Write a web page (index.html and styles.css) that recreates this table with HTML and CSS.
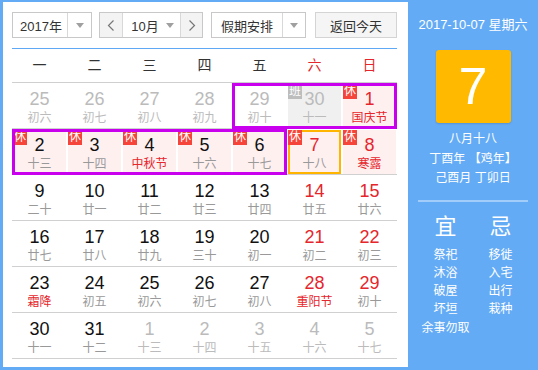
FILE: index.html
```html
<!DOCTYPE html>
<html lang="zh-CN">
<head>
<meta charset="utf-8">
<title>万年历</title>
<link rel="stylesheet" href="styles.css">
</head>
<body>
<div class="app">
  <div class="main">
    <div class="toolbar">
      <div class="select year">
        <span class="val">2017年</span>
        <span class="caret-box"><i class="caret"></i></span>
      </div>
      <div class="monthnav">
        <span class="nav prev"><svg width="8" height="11" viewBox="0 0 8 11"><polyline points="6.5,0.5 1.5,5.5 6.5,10.5" fill="none" stroke="#777" stroke-width="1.2"/></svg></span>
        <span class="mval">10月<i class="caret"></i></span>
        <span class="nav next"><svg width="8" height="11" viewBox="0 0 8 11"><polyline points="1.5,0.5 6.5,5.5 1.5,10.5" fill="none" stroke="#777" stroke-width="1.2"/></svg></span>
      </div>
      <div class="select holiday">
        <span class="val">假期安排</span>
        <span class="caret-box"><i class="caret"></i></span>
      </div>
      <div class="today-btn">返回今天</div>
    </div>

    <div class="weekdays">
      <span>一</span><span>二</span><span>三</span><span>四</span><span>五</span><span class="red">六</span><span class="red">日</span>
    </div>

    <div class="grid">
      <div class="week">
        <div class="cell out"><div class="inner"><div class="num">25</div><div class="lu">初六</div></div></div>
        <div class="cell out"><div class="inner"><div class="num">26</div><div class="lu">初七</div></div></div>
        <div class="cell out"><div class="inner"><div class="num">27</div><div class="lu">初八</div></div></div>
        <div class="cell out"><div class="inner"><div class="num">28</div><div class="lu">初九</div></div></div>
        <div class="cell out"><div class="inner"><div class="num">29</div><div class="lu">初十</div></div></div>
        <div class="cell out"><div class="inner work"><span class="badge ban">班</span><div class="num">30</div><div class="lu">十一</div></div></div>
        <div class="cell"><div class="inner rest"><span class="badge">休</span><div class="num red">1</div><div class="lu red">国庆节</div></div></div>
      </div>
      <div class="week">
        <div class="cell"><div class="inner rest"><span class="badge">休</span><div class="num">2</div><div class="lu">十三</div></div></div>
        <div class="cell"><div class="inner rest"><span class="badge">休</span><div class="num">3</div><div class="lu">十四</div></div></div>
        <div class="cell"><div class="inner rest"><span class="badge">休</span><div class="num">4</div><div class="lu red">中秋节</div></div></div>
        <div class="cell"><div class="inner rest"><span class="badge">休</span><div class="num">5</div><div class="lu">十六</div></div></div>
        <div class="cell"><div class="inner rest"><span class="badge">休</span><div class="num">6</div><div class="lu">十七</div></div></div>
        <div class="cell"><div class="inner rest today"><span class="badge">休</span><div class="num red">7</div><div class="lu">十八</div></div></div>
        <div class="cell"><div class="inner rest"><span class="badge">休</span><div class="num red">8</div><div class="lu red">寒露</div></div></div>
      </div>
      <div class="week">
        <div class="cell"><div class="inner"><div class="num">9</div><div class="lu">二十</div></div></div>
        <div class="cell"><div class="inner"><div class="num">10</div><div class="lu">廿一</div></div></div>
        <div class="cell"><div class="inner"><div class="num">11</div><div class="lu">廿二</div></div></div>
        <div class="cell"><div class="inner"><div class="num">12</div><div class="lu">廿三</div></div></div>
        <div class="cell"><div class="inner"><div class="num">13</div><div class="lu">廿四</div></div></div>
        <div class="cell"><div class="inner"><div class="num red">14</div><div class="lu">廿五</div></div></div>
        <div class="cell"><div class="inner"><div class="num red">15</div><div class="lu">廿六</div></div></div>
      </div>
      <div class="week">
        <div class="cell"><div class="inner"><div class="num">16</div><div class="lu">廿七</div></div></div>
        <div class="cell"><div class="inner"><div class="num">17</div><div class="lu">廿八</div></div></div>
        <div class="cell"><div class="inner"><div class="num">18</div><div class="lu">廿九</div></div></div>
        <div class="cell"><div class="inner"><div class="num">19</div><div class="lu">三十</div></div></div>
        <div class="cell"><div class="inner"><div class="num">20</div><div class="lu">初一</div></div></div>
        <div class="cell"><div class="inner"><div class="num red">21</div><div class="lu">初二</div></div></div>
        <div class="cell"><div class="inner"><div class="num red">22</div><div class="lu">初三</div></div></div>
      </div>
      <div class="week">
        <div class="cell"><div class="inner"><div class="num">23</div><div class="lu red">霜降</div></div></div>
        <div class="cell"><div class="inner"><div class="num">24</div><div class="lu">初五</div></div></div>
        <div class="cell"><div class="inner"><div class="num">25</div><div class="lu">初六</div></div></div>
        <div class="cell"><div class="inner"><div class="num">26</div><div class="lu">初七</div></div></div>
        <div class="cell"><div class="inner"><div class="num">27</div><div class="lu">初八</div></div></div>
        <div class="cell"><div class="inner"><div class="num red">28</div><div class="lu red">重阳节</div></div></div>
        <div class="cell"><div class="inner"><div class="num red">29</div><div class="lu">初十</div></div></div>
      </div>
      <div class="week">
        <div class="cell"><div class="inner"><div class="num">30</div><div class="lu">十一</div></div></div>
        <div class="cell"><div class="inner"><div class="num">31</div><div class="lu">十二</div></div></div>
        <div class="cell out"><div class="inner"><div class="num">1</div><div class="lu">十三</div></div></div>
        <div class="cell out"><div class="inner"><div class="num">2</div><div class="lu">十四</div></div></div>
        <div class="cell out"><div class="inner"><div class="num">3</div><div class="lu">十五</div></div></div>
        <div class="cell out"><div class="inner"><div class="num">4</div><div class="lu">十六</div></div></div>
        <div class="cell out"><div class="inner"><div class="num">5</div><div class="lu">十七</div></div></div>
      </div>
      <div class="hl hl1"></div>
      <div class="hl hl2"></div>
    </div>
  </div>

  <div class="side">
    <div class="date">2017-10-07 星期六</div>
    <div class="bigday">7</div>
    <div class="lunar">
      <div>八月十八</div>
      <div>丁酉年 【鸡年】</div>
      <div>己酉月 丁卯日</div>
    </div>
    <div class="sep"></div>
    <div class="yiji">
      <div class="col">
        <div class="big">宜</div>
        <div class="items">
          <div>祭祀</div><div>沐浴</div><div>破屋</div><div>坏垣</div><div>余事勿取</div>
        </div>
      </div>
      <div class="col">
        <div class="big">忌</div>
        <div class="items">
          <div>移徙</div><div>入宅</div><div>出行</div><div>栽种</div>
        </div>
      </div>
    </div>
  </div>
</div>
</body>
</html>
```
FILE: styles.css
```css
* { box-sizing: border-box; }
body {
  margin: 0;
  font-family: "Liberation Sans", "Noto Sans CJK SC", sans-serif;
}
.app {
  width: 538px;
  height: 370px;
  background: #64abf6;
  display: flex;
  padding: 2px 0 3px 3px;
}
.main {
  width: 405px;
  background: #fff;
  padding: 10px 11px 0 9px;
}

/* toolbar */
.toolbar {
  display: flex;
  padding-bottom: 10px;
  border-bottom: 1px solid #5ea8f6;
  font-size: 13px;
  color: #333;
}
.select, .monthnav, .today-btn {
  height: 26px;
  border: 1px solid #c8c8c8;
  display: flex;
  align-items: stretch;
}
.select { background: #fff; }
.select .val {
  display: flex;
  align-items: center;
  justify-content: center;
  border-right: 1px solid #d8d8d8;
}
.caret-box {
  display: flex;
  align-items: center;
  justify-content: center;
  flex: 1;
}
.caret {
  display: inline-block;
  width: 0;
  height: 0;
  border-left: 4px solid transparent;
  border-right: 4px solid transparent;
  border-top: 5px solid #a0a0a0;
}
.year { width: 80px; }
.year .val { width: 55px; padding-left: 2px; }
.monthnav { width: 104px; margin-left: 7px; }
.nav {
  display: flex;
  align-items: center;
  justify-content: center;
  background: #f3f3f3;
}
.prev { width: 23px; border-right: 1px solid #d8d8d8; }
.next { width: 22px; border-left: 1px solid #d8d8d8; }
.mval {
  flex: 1;
  display: flex;
  align-items: center;
  justify-content: center;
  gap: 7px;
  padding-left: 2px;
  background: #fff;
}
.holiday { width: 95px; margin-left: 8px; }
.holiday .val { width: 71px; }
.today-btn {
  width: 82px;
  margin-left: 9px;
  background: #f5f5f5;
  border-color: #d4d4d4;
  align-items: center;
  justify-content: center;
}

/* weekday header */
.weekdays {
  display: grid;
  grid-template-columns: repeat(7, 55px);
  height: 34px;
  border-bottom: 1px solid #cfcfcf;
  font-size: 14px;
  line-height: 33px;
  text-align: center;
  color: #333;
}
.red { color: #e5262c; }

/* day grid */
.grid { position: relative; }
.week {
  display: grid;
  grid-template-columns: repeat(7, 55px);
  height: 46px;
  border-bottom: 1px solid #d0d0d0;
}
.week:last-of-type { border-bottom: none; }
.cell { padding: 1px; }
.inner {
  position: relative;
  height: 100%;
  text-align: center;
  padding-top: 4px;
}
.num {
  font-size: 18px;
  line-height: 22px;
  color: #111;
}
.lu {
  font-size: 12px;
  line-height: 16px;
  color: #999;
}
.num.red, .lu.red { color: #e5262c; }
.out .num, .out .lu { color: #bbb; }
.rest { background: #fff0f0; }
.work { background: #f0f0f0; }
.today {
  border: 2px solid #ffb400;
  padding-top: 2px;
}
.badge {
  position: absolute;
  left: 0;
  top: 0;
  width: 14px;
  height: 15px;
  background: #f5443a;
  color: #fff;
  font-size: 12px;
  line-height: 15px;
  text-align: center;
}
.badge.ban { background: #bdbdbd; }
.today .badge { left: -2px; top: -2px; }

.hl {
  position: absolute;
  border: 3px solid #c800ee;
}
.hl1 { left: 220px; top: 0; width: 165px; height: 46px; }
.hl2 { left: 0; top: 46px; width: 275px; height: 46px; }

/* side panel */
.side {
  flex: 1;
  color: #fff;
  text-align: center;
  padding-top: 13px;
}
.date {
  font-size: 13px;
  line-height: 20px;
}
.bigday {
  width: 75px;
  height: 73px;
  margin: 15px auto 0;
  background: #ffba00;
  border-radius: 3px;
  box-shadow: 0 1px 2px rgba(0, 0, 0, 0.15);
  font-size: 52px;
  line-height: 73px;
}
.lunar {
  margin-top: 7px;
  font-size: 12px;
  line-height: 19.5px;
}
.sep {
  height: 2px;
  background: rgba(255, 255, 255, 0.4);
  margin: 11px 10px 0;
}
.yiji {
  display: flex;
  margin: 0 10px;
}
.col { width: 55px; }
.big {
  font-size: 22px;
  line-height: 26px;
  margin-top: 12px;
}
.items {
  margin-top: 6px;
  font-size: 12px;
  line-height: 18.3px;
}
```
